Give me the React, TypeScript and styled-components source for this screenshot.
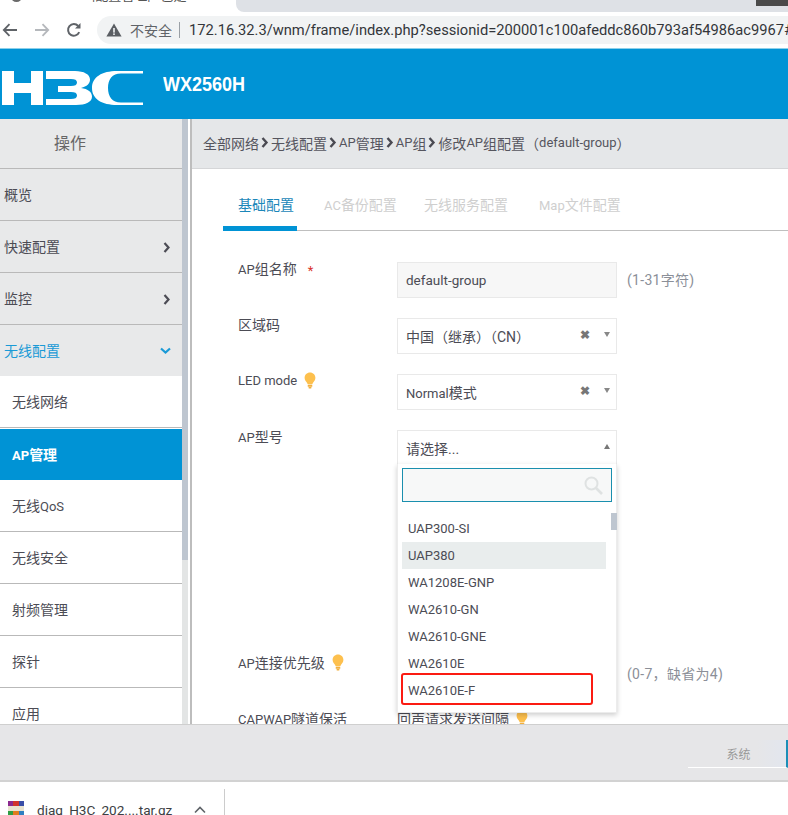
import React from "react";
import styled, { createGlobalStyle } from "styled-components";

const Global = createGlobalStyle`
  html, body { margin: 0; padding: 0; background: #fff; }
  body { width: 788px; height: 815px; overflow: hidden; font-family: "Roboto", "Noto Sans CJK SC", sans-serif; font-size: 14px; color: #4c4c55; }
  * { box-sizing: border-box; }
`;

const Page = styled.div`
  width: 788px; height: 815px; display: flex; flex-direction: column; overflow: hidden;
`;
const TabStrip = styled.div`
  height: 12px; flex: none; background: #fff; display: flex; overflow: hidden;
`;
const ActiveTab = styled.div`
  width: 236px; flex: none; display: flex; padding-left: 11px; align-items: flex-end; height: 12px; overflow: hidden;
`;
const Favicon = styled.div`
  width: 11px; height: 11px; border-radius: 50%; background: #6a6a6a; margin-bottom: 10px; flex: none;
`;
const TabTitle = styled.div`
  font-size: 13px; line-height: 16px; margin: 0 0 8px 70px; color: #555; white-space: nowrap;
`;
const InactiveStrip = styled.div`
  flex: 1; background: #dee1e6; border-bottom-left-radius: 8px; display: flex; justify-content: flex-end; align-items: flex-start;
`;
const WindowButton = styled.div`
  width: 32px; height: 6px; background: #4a4a4a;
`;
const Toolbar = styled.div`
  height: 37px; flex: none; background: #fff; display: flex; align-items: center; border-bottom: 1px solid #8cd0ea; padding-left: 1px;
`;
const NavIcons = styled.div`
  display: flex; gap: 14px; width: 96px; flex: none; align-items: center;
`;
const AddressBar = styled.div`
  flex: 1; min-width: 0; height: 28px; background: #f1f3f4; border-radius: 14px 0 0 14px; display: flex; align-items: center; padding-left: 9px; white-space: nowrap; overflow: hidden; font-family: "Roboto", sans-serif; font-size: 14.7px; color: #33363a;
`;
const WarnIcon = styled.svg`
  flex: none;
`;
const NotSafe = styled.span`
  flex: none; font-family: "Noto Sans CJK SC", sans-serif; font-size: 14px; color: #5f6368; margin: 0 7px 0 8px;
`;
const Divider = styled.span`
  width: 1px; height: 16px; background: #9aa0a6; margin-right: 9px; flex: none;
`;
const Url = styled.span`
  flex: none;
`;
const Header = styled.header`
  height: 70px; flex: none; background: #0093d5; display: flex; align-items: center; padding-left: 2px; gap: 20px;
`;
const LogoMark = styled.svg`
  margin-top: 7px; flex: none;
`;
const Model = styled.div`
  font-family: "Liberation Sans", sans-serif; font-weight: 700; font-size: 20px; color: #fff; transform: scaleX(0.9); transform-origin: left center;
`;
const Main = styled.div`
  height: 605px; flex: none; display: flex; overflow: hidden;
`;
const Sidebar = styled.nav`
  width: 182px; flex: none; display: flex; flex-direction: column;
`;
const SideTitle = styled.div`
  height: 50px; flex: none; background: #e8e9ea; border-bottom: 1px solid #b9b9b9; display: flex; align-items: center; justify-content: center; padding: 0 42px 3px 0; font-size: 16px; color: #666;
`;
const SideItem = styled.div<{ $kind?: "top" | "open" | "sub" | "active" }>`
  height: ${(p) => (p.$kind === "open" ? 51 : 52)}px; flex: none; display: flex; align-items: center; justify-content: space-between;
  padding: ${(p) => (p.$kind === "sub" || p.$kind === "active" ? "1px 12px 0" : "1px 11px 0 4px")};
  background: ${(p) => (p.$kind === "active" ? "#0093d5" : p.$kind === "sub" ? "#fff" : "#e8e9ea")};
  color: ${(p) => (p.$kind === "active" ? "#fff" : p.$kind === "open" ? "#1a9ad6" : "#4c4c55")};
  font-weight: ${(p) => (p.$kind === "active" ? 700 : 400)};
  border-bottom: ${(p) => (p.$kind === "open" || p.$kind === "active" ? "0" : "1px solid #b9b9b9")};
  border-top: ${(p) => (p.$kind === "active" ? "1px solid #fff" : "0")};
`;
const SideLabel = styled.span`
  margin-bottom: 3px;
`;
const Track = styled.div`
  width: 8px; flex: none; background: #e3e5e5; border-right: 2px solid #fff;
`;
const Thumb = styled.div`
  height: 441px; background: #bec6d0;
`;
const Content = styled.div`
  flex: 1; border-left: 2px solid #bdbdbd; display: flex; flex-direction: column; min-width: 0; position: relative;
`;
const Crumbs = styled.div`
  height: 50px; flex: none; background: #e5e7e9; border-bottom: 1px solid #d5d6d8; display: flex; align-items: center; padding: 0 0 2px 11px; color: #55555e; white-space: nowrap;
`;
const CrumbArrow = styled.span`
  display: inline-flex; margin: 0 2px;
`;
const Lt = styled.span`
  font-size: 13px;
`;
const TabsRow = styled.div`
  margin: 0 0 0 31px; height: 62px; border-bottom: 1px solid #bfbfbf; display: flex; align-items: stretch; flex: none;
`;
const TabItem = styled.div<{ $active?: boolean; $w: number }>`
  width: ${(p) => p.$w}px; height: 62px; flex: none; padding: 26px 0 0 ${(p) => (p.$active ? 15 : 0)}px; line-height: 20px; white-space: nowrap;
  margin-right: ${(p) => (p.$active ? 27 : 0)}px;
  color: ${(p) => (p.$active ? "#1b87b9" : "#cfcfcf")};
  border-bottom: ${(p) => (p.$active ? "5px solid #0093d5" : "0")};
`;
const Form = styled.div`
  padding: 31px 0 0 46px; display: flex; flex-direction: column; gap: 20px;
`;
const Row = styled.div<{ $h?: number }>`
  display: flex; height: ${(p) => p.$h ?? 36}px; flex: none;
`;
const Label = styled.div`
  width: 159px; flex: none; display: flex; align-items: center; height: 16px; color: #4c4c55; white-space: nowrap; margin-top: -2px;
`;
const Star = styled.span`
  color: #d9342b; font-size: 13px; margin: 5px 0 0 11px;
`;
const Field = styled.div<{ $muted?: boolean }>`
  width: 220px; height: 36px; flex: none; border: 1px solid #e9e9e9; background: ${(p) => (p.$muted ? "#f7f7f7" : "#fff")}; display: flex; align-items: center; padding: 0 6px 0 8px; color: #4c4c55;
`;
const FieldText = styled.span<{ $latin?: boolean }>`
  flex: 1; white-space: nowrap; font-size: ${(p) => (p.$latin ? 13.5 : 14)}px;
`;
const Hint = styled.span`
  margin-left: 10px; color: #8b8f98; height: 36px; line-height: 36px; white-space: nowrap; letter-spacing: 0.3px;
`;
const Clear = styled.span`
  font-size: 12px; font-weight: 700; color: #777; margin: -3px 14px 0 0; line-height: 1;
`;
const Caret = styled.span<{ $up?: boolean }>`
  width: 0; height: 0; margin-top: -4px; border-left: 3.5px solid transparent; border-right: 3.5px solid transparent;
  ${(p) => (p.$up ? "border-bottom: 5px solid #777;" : "border-top: 5px solid #888;")}
`;
const Menu = styled.div`
  position: absolute; left: 205px; top: 345px; width: 220px; height: 249px; background: #fff; box-shadow: 0 2px 5px rgba(0,0,0,.2); padding: 4px 5px 0 4px; border: 1px solid #ececec; border-top: 0;
`;
const SearchBox = styled.div`
  width: 210px; height: 34px; border: 1px solid #1a8fae; background: #f7f8f8; display: flex; align-items: center; justify-content: flex-end; padding-right: 8px; margin-bottom: 13px;
`;
const List = styled.div`
  position: relative; display: flex; flex-direction: column;
`;
const Option = styled.div<{ $hover?: boolean }>`
  height: 27px; width: 204px; padding: 0 0 1px 6px; display: flex; align-items: center; font-size: 13px; color: #4c4c55; background: ${(p) => (p.$hover ? "#e9eded" : "transparent")};
`;
const ScrollThumb = styled.div`
  position: absolute; right: -6px; top: -2px; width: 6px; height: 17px; background: #bec6d0;
`;
const RedBox = styled.div`
  position: absolute; left: -1px; top: 158px; width: 192px; height: 32px; border: 2.5px solid #fb1b12; border-radius: 3px;
`;
const Footer = styled.div`
  height: 58px; flex: none; background: #e6e6e8; border-top: 1px solid #cfcfcf; border-bottom: 2px solid #d2d2d2; display: flex; justify-content: flex-end; padding-top: 15px;
`;
const SystemBtn = styled.div`
  width: 100px; height: 28px; border-bottom: 1px solid #fff; border-right: 2px solid #1b8fb8; display: flex; align-items: center; justify-content: center; padding-left: 3px; font-size: 12px; color: #999; background: linear-gradient(90deg, #e6e6e8 70%, #e2e6ee);
`;
const Downloads = styled.div`
  flex: 1; background: #fff; display: flex; align-items: flex-start; padding: 13px 0 0 8px; overflow: hidden;
`;
const ArchiveIcon = styled.svg`
  margin-top: 6px; flex: none;
`;
const FileName = styled.span`
  font-family: "Roboto", sans-serif; font-size: 13.6px; color: #3c4043; margin-left: 13px; white-space: nowrap; line-height: 30px;
`;
const Chevron = styled.span`
  margin: 11px 0 0 22px; display: inline-flex;
`;
const Sep = styled.span`
  width: 1px; height: 26px; background: #ccc; margin: -6px 0 0 18px;
`;
const BulbIcon = styled.svg`
  margin-left: 7px; flex: none;
`;

const Bulb = () => (
  <BulbIcon width="12" height="17" viewBox="0 0 12 17">
    <path d="M6 0.5C2.9 0.5 .6 2.8 .6 5.7c0 2.1 1.2 3.4 2.2 4.7.5.7.7 1.2.8 1.8h4.8c.1-.6.3-1.1.8-1.8 1-1.3 2.2-2.6 2.2-4.7C11.4 2.8 9.1.5 6 .5z" fill="#fdc04e" />
    <rect x="3.7" y="12.8" width="4.6" height="2" rx=".6" fill="#f2b03e" />
    <rect x="4.5" y="15" width="3" height="1.4" rx=".6" fill="#f2b03e" />
  </BulbIcon>
);
const Right = ({ color = "#4c4c55" }: { color?: string }) => (
  <svg width="8" height="11" viewBox="0 0 8 11"><path d="M1.5 1l4 4.5-4 4.5" stroke={color} strokeWidth="2.2" fill="none" /></svg>
);
const Down = () => (
  <svg width="11" height="8" viewBox="0 0 11 8"><path d="M1 1.5l4.5 4 4.5-4" stroke="#1a9ad6" strokeWidth="2.2" fill="none" /></svg>
);
const Back = ({ color }: { color: string }) => (
  <svg width="18" height="18" viewBox="0 0 18 18"><path d="M16 9H3M8.5 3.2L2.8 9l5.7 5.8" stroke={color} strokeWidth="1.8" fill="none" /></svg>
);
const Forward = ({ color }: { color: string }) => (
  <svg width="18" height="18" viewBox="0 0 18 18"><path d="M2 9h13M9.5 3.2L15.2 9l-5.7 5.8" stroke={color} strokeWidth="1.8" fill="none" /></svg>
);
const Reload = () => (
  <svg width="18" height="18" viewBox="0 0 18 18"><path d="M14.2 11.2A5.8 5.8 0 1 1 13.2 5" stroke="#5f6368" strokeWidth="2" fill="none" /><path d="M15.5 2v5.6H10z" fill="#5f6368" /></svg>
);
const Warn = () => (
  <WarnIcon width="16" height="14" viewBox="0 0 16 14"><path d="M8 .5L15.6 13.5H.4z" fill="#5a5e63" /><rect x="7.2" y="5" width="1.6" height="4.6" fill="#f1f3f4" /><rect x="7.2" y="10.4" width="1.6" height="1.6" fill="#f1f3f4" /></WarnIcon>
);
const Logo = () => (
  <LogoMark width="141" height="36" viewBox="0 0 141 36" fill="#fff">
    <path d="M0 1h12v12h17V1h12v34H29V23H12v12H0z" />
    <path d="M44 1h29c9 0 15 3.500 15 8.500 0 4-3 7-9 8.500 7 1 11 4 11 8.500 0 5.500-6 8.500-16 8.500H44v-6h25c4 0 6-1 6-3.500s-2-3.500-6-3.500H56v-6h13c4 0 6-1 6-3.500s-2-3.500-6-3.500H44z" />
    <path d="M141 1h-26c-15 0-25 6-25 17s10 17 25 17h26v-2.500h-22c-9 0-13-6-13-14.500s4-14.500 13-14.500h22z" />
  </LogoMark>
);
const CrumbSep = () => (
  <CrumbArrow><svg width="8" height="11" viewBox="0 0 8 11"><path d="M1.500 1l4 4.500-4 4.500" stroke="#4a4a52" strokeWidth="2.4" fill="none" /></svg></CrumbArrow>
);
const SearchIcon = () => (
  <svg width="19" height="19" viewBox="0 0 19 19"><circle cx="7.500" cy="7.500" r="6" stroke="#dfe2e2" strokeWidth="2" fill="none" /><path d="M12 12l6 6" stroke="#dfe2e2" strokeWidth="2.600" /></svg>
);
const Archive = () => (
  <ArchiveIcon width="16" height="16" viewBox="0 0 16 16">
    <rect x="0" y="0" width="5" height="5" fill="#8b2a8f" /><rect x="5" y="0" width="6" height="5" fill="#d0342c" /><rect x="11" y="0" width="5" height="5" fill="#3a4ea8" />
    <rect x="0" y="5" width="16" height="5" fill="#e9e3d0" /><rect x="0" y="10" width="5" height="6" fill="#2f9e44" /><rect x="5" y="10" width="6" height="6" fill="#e07b1f" /><rect x="11" y="10" width="5" height="6" fill="#2f7fc1" />
  </ArchiveIcon>
);

const sideTop: { t: string; k: "top" | "open"; a?: "r" | "d" }[] = [
  { t: "概览", k: "top" },
  { t: "快速配置", k: "top", a: "r" },
  { t: "监控", k: "top", a: "r" },
  { t: "无线配置", k: "open", a: "d" },
];
const options = ["UAP300-SI", "UAP380", "WA1208E-GNP", "WA2610-GN", "WA2610-GNE", "WA2610E", "WA2610E-F"];

export default function App() {
  return (
    <Page>
      <Global />
      <TabStrip>
        <ActiveTab><Favicon /><TabTitle>|配置管理| - 已是</TabTitle></ActiveTab>
        <InactiveStrip><WindowButton /></InactiveStrip>
      </TabStrip>
      <Toolbar>
        <NavIcons><Back color="#5f6368" /><Forward color="#b5b8bc" /><Reload /></NavIcons>
        <AddressBar>
          <Warn /><NotSafe>不安全</NotSafe><Divider /><Url>172.16.32.3/wnm/frame/index.php?sessionid=200001c100afeddc860b793af54986ac9967#</Url>
        </AddressBar>
      </Toolbar>
      <Header><Logo /><Model>WX2560H</Model></Header>
      <Main>
        <Sidebar>
          <SideTitle>操作</SideTitle>
          {sideTop.map((s) => (
            <SideItem key={s.t} $kind={s.k}>
              <SideLabel>{s.t}</SideLabel>
              {s.a === "r" && <Right />}
              {s.a === "d" && <Down />}
            </SideItem>
          ))}
          <SideItem $kind="sub"><SideLabel>无线网络</SideLabel></SideItem>
          <SideItem $kind="active"><SideLabel><Lt>AP</Lt>管理</SideLabel></SideItem>
          <SideItem $kind="sub"><SideLabel>无线<Lt>QoS</Lt></SideLabel></SideItem>
          {["无线安全", "射频管理", "探针", "应用"].map((t) => (
            <SideItem key={t} $kind="sub"><SideLabel>{t}</SideLabel></SideItem>
          ))}
        </Sidebar>
        <Track><Thumb /></Track>
        <Content>
          <Crumbs>
            全部网络<CrumbSep />无线配置<CrumbSep /><Lt>AP</Lt>管理<CrumbSep /><Lt>AP</Lt>组<CrumbSep />修改<Lt>AP</Lt>组配置（<Lt>default-group</Lt>）
          </Crumbs>
          <TabsRow>
            <TabItem $active $w={74}>基础配置</TabItem>
            <TabItem $w={100}><Lt>AC</Lt>备份配置</TabItem>
            <TabItem $w={115}>无线服务配置</TabItem>
            <TabItem $w={110}><Lt>Map</Lt>文件配置</TabItem>
          </TabsRow>
          <Form>
            <Row>
              <Label><span><Lt>AP</Lt>组名称</span><Star>*</Star></Label>
              <Field $muted><FieldText $latin>default-group</FieldText></Field>
              <Hint>(1-31字符)</Hint>
            </Row>
            <Row>
              <Label>区域码</Label>
              <Field><FieldText>中国（继承）（CN）</FieldText><Clear>✖</Clear><Caret /></Field>
            </Row>
            <Row>
              <Label><Lt>LED mode</Lt><Bulb /></Label>
              <Field><FieldText><Lt>Normal</Lt>模式</FieldText><Clear>✖</Clear><Caret /></Field>
            </Row>
            <Row $h={206}>
              <Label><span><Lt>AP</Lt>型号</span></Label>
              <Field><FieldText>请选择...</FieldText><Caret $up /></Field>
            </Row>
            <Row>
              <Label><span><Lt>AP</Lt>连接优先级</span><Bulb /></Label>
              <Field />
              <Hint>(0-7，缺省为4)</Hint>
            </Row>
            <Row>
              <Label><span><Lt>CAPWAP</Lt>隧道保活</span></Label>
              <Label>回声请求发送间隔<Bulb /></Label>
            </Row>
          </Form>
          <Menu>
            <SearchBox><SearchIcon /></SearchBox>
            <List>
              {options.map((o) => (
                <Option key={o} $hover={o === "UAP380"}>{o}</Option>
              ))}
              <ScrollThumb />
              <RedBox />
            </List>
          </Menu>
        </Content>
      </Main>
      <Footer><SystemBtn>系统</SystemBtn></Footer>
      <Downloads>
        <Archive /><FileName>diag_H3C_202....tar.gz</FileName>
        <Chevron><svg width="12" height="8" viewBox="0 0 12 8"><path d="M1 6.500l5-5 5 5" stroke="#5f6368" strokeWidth="1.600" fill="none" /></svg></Chevron>
        <Sep />
      </Downloads>
    </Page>
  );
}
